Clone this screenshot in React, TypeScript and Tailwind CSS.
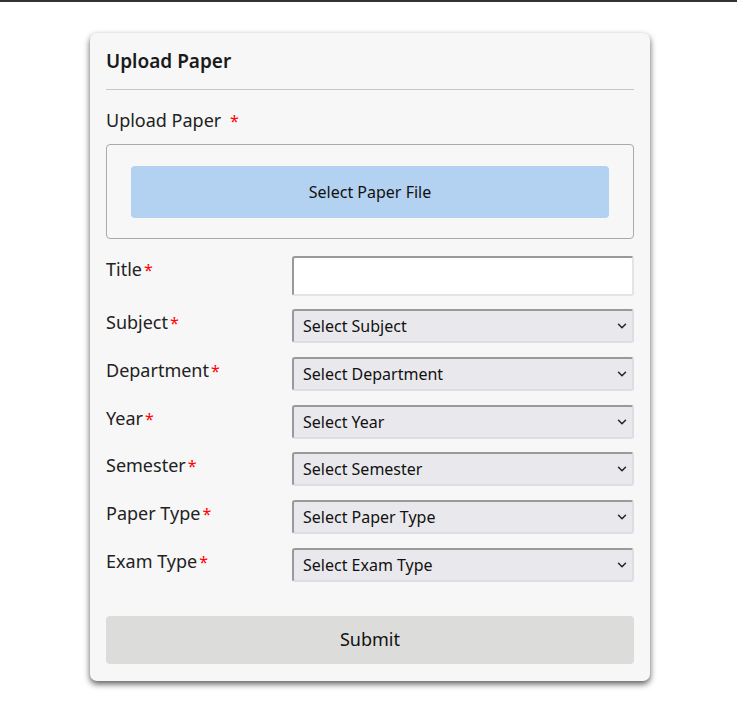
import { ChevronDown } from "lucide-react";

const fields = [
  { label: "Subject", placeholder: "Select Subject" },
  { label: "Department", placeholder: "Select Department" },
  { label: "Year", placeholder: "Select Year" },
  { label: "Semester", placeholder: "Select Semester" },
  { label: "Paper Type", placeholder: "Select Paper Type" },
  { label: "Exam Type", placeholder: "Select Exam Type" },
];

function Label({ text }: { text: string }) {
  return (
    <label className="w-[186px] shrink-0 pt-[1px] text-[18px] leading-6 text-[#222]">
      {text}
      <span className="ml-[2px] text-[16px] text-[#f00]">*</span>
    </label>
  );
}

export default function App() {
  return (
    <div className="min-h-[723px] bg-white font-['Noto_Sans',sans-serif] text-[#1a1a1a]">
      <div className="h-[2px] bg-[#333]" />
      <div className="flex justify-center pt-[31px]">
        <form className="ml-[3px] w-[560px] rounded-[7px] bg-[#f7f7f7] px-4 pb-[17px] pt-4 shadow-[0_3px_6px_rgba(0,0,0,0.65)]">
          <h2 className="text-[19px] font-semibold leading-6">Upload Paper</h2>
          <hr className="mt-4 border-t border-[#c8c8c8]" />

          <div className="mt-[18px] text-[18px] leading-6 text-[#222]">
            Upload Paper <span className="ml-[4px] text-[16px] text-[#f00]">*</span>
          </div>

          <div className="mt-[11px] rounded-[4px] border border-[#aaa] px-6 pb-5 pt-[21px]">
            <button
              type="button"
              className="flex h-[52px] w-full items-center justify-center rounded-[4px] bg-[#b3d1f0] text-[16px] text-[#111]"
            >
              Select Paper File
            </button>
          </div>

          <div className="mt-[17px] flex items-start">
            <Label text="Title" />
            <input
              type="text"
              className="h-[40px] flex-1 rounded-[3px] border-2 border-b-[#e4e4e4] border-l-[#999] border-r-[#e4e4e4] border-t-[#999] bg-white px-2 outline-none"
            />
          </div>

          <div className="mt-[13px] flex flex-col gap-[13.8px]">
            {fields.map((f) => (
              <div key={f.label} className="flex items-start">
                <Label text={f.label} />
                <div className="relative flex-1">
                  <select className="h-[34px] w-full appearance-none rounded-[3px] border-2 border-b-[#dedee2] border-l-[#9a9a9a] border-r-[#dedee2] border-t-[#9a9a9a] bg-[#e9e9ed] pl-[9px] text-[16px] text-[#111] outline-none">
                    <option>{f.placeholder}</option>
                  </select>
                  <ChevronDown
                    size={14}
                    strokeWidth={2.5}
                    className="pointer-events-none absolute right-[5px] top-[10px] text-[#222]"
                  />
                </div>
              </div>
            ))}
          </div>

          <button
            type="button"
            className="mt-[34px] flex h-[48px] w-full items-center justify-center rounded-[4px] bg-[#dcdcdb] text-[18px] text-[#111]"
          >
            Submit
          </button>
        </form>
      </div>
    </div>
  );
}
